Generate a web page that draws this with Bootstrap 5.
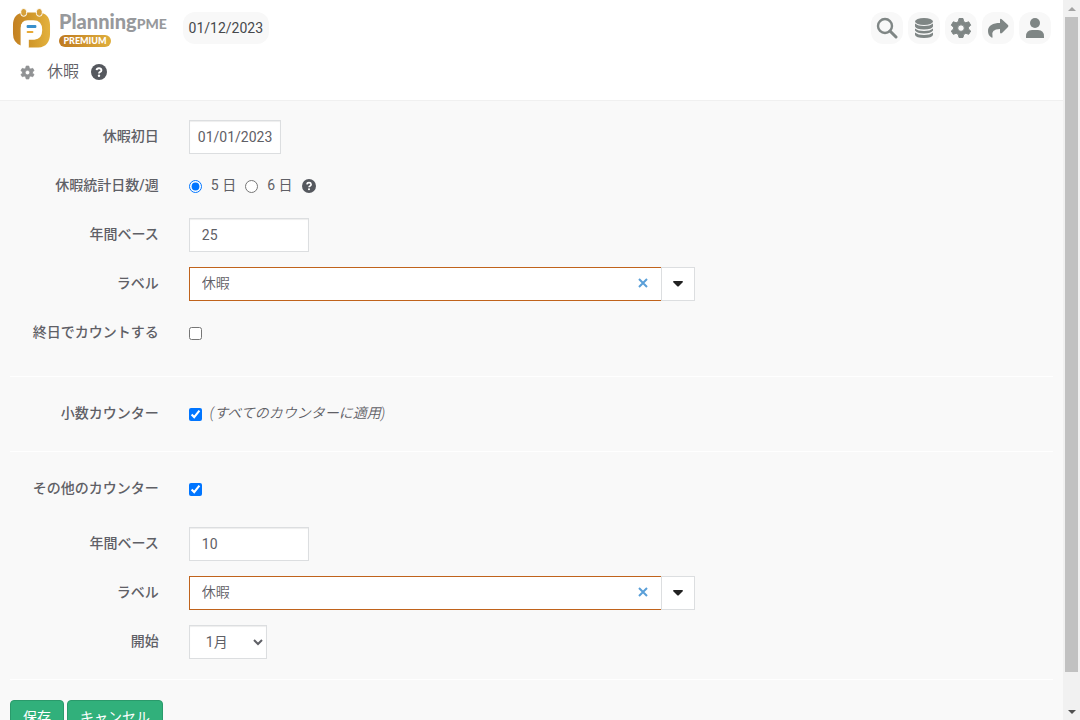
<!DOCTYPE html>
<html lang="ja">
<head>
<meta charset="utf-8">
<meta name="viewport" content="width=device-width, initial-scale=1">
<title>PlanningPME - 休暇</title>
<link href="https://cdn.jsdelivr.net/npm/bootstrap@5.3.0/dist/css/bootstrap.min.css" rel="stylesheet">
<style>
body{font-family:Roboto,"Noto Sans CJK JP",sans-serif;font-size:14px;line-height:20px;color:#5f6066;background:#f9f9f9}
.topbar{height:101px;border-bottom:1px solid #f0f0f0}
.brand-text{font-family:Lato,sans-serif;font-weight:900;font-size:20px;line-height:22px;color:#97999c}
.brand-text span{font-size:14px}
.premium{width:52px;height:12px;font-family:Lato,sans-serif;font-weight:900;font-size:9px;line-height:12px;background:linear-gradient(90deg,#bf7a20,#dfae3c)}
.date-pill{background:#f8f8f8;color:#46484c;height:32px;width:86px;border-radius:12px}
.tools{gap:5px;margin-right:-4px}
.tool{width:32px;height:32px;border-radius:12px;background:#f8f8f8;color:#7f8685}
.tool svg{width:22px;height:22px}
.page-title{font-size:16px;line-height:20px;font-weight:350}
.title-row{padding-top:14px}
.content{padding:19px 10px}
.form-line{--bs-gutter-x:30px;min-height:34px;margin-bottom:15px}
.form-line label.col-2{font-weight:500;line-height:20px;padding-top:6px}
.form-line .col-10{min-height:34px}
.form-line .col-10 label,.form-line em{line-height:20px;padding-bottom:2px}
.form-line em{font-weight:350}
.form-line .day-choice{margin:0 9px}
.form-line input.form-control,.form-line .form-select{height:34px;border:1px solid #dcdee0;border-radius:0;padding:6px 12px;font-size:14px;line-height:20px;color:#5f6066;box-shadow:inset 0 1px 1px rgba(0,0,0,.07)}
.form-line input.date-in{width:92px;padding:6px 8px}
.form-line .num-in{width:120px}
.form-line .form-select{width:78px;padding:6px 4px 6px 12px;appearance:auto;background:#fff}
.combo{width:506px}
.form-line .combo input.form-control{border-color:#c0631c;border-right:0;font-weight:350;box-shadow:none;padding:4px 32px 8px 12px}
.combo .clear-btn{right:45px;top:10px;z-index:6;line-height:0;color:#5a9fd8}
.combo .drop-btn{width:34px;height:34px;background:#fff;border:1px solid #dcdee0;border-radius:0;color:#222}
.tick{width:13px;height:13px;margin:0;accent-color:#0075ff}
.section-end{margin-bottom:26px}
.group-head{margin-bottom:21px}
hr.rule{border-top:1px solid #fff;opacity:1;margin:20px 0}
.btn-go{background:#31b07b;border:1px solid #2a9a6b;color:#fff;font-size:14px;line-height:20px;padding:6px 12px;border-radius:4px}
.actions{gap:3px}
.help{color:#55585e}
.scroll-rail{width:17px;background:#f1f1f1}
.scroll-arrow{height:17px}
.scroll-thumb{width:13px;flex:0 1 655px;background:#c1c1c1}
</style>
</head>
<body>
<div class="d-flex vh-100 overflow-hidden">
<div class="flex-grow-1 overflow-hidden">
  <header class="topbar bg-white">
    <div class="d-flex align-items-center justify-content-between px-2 pt-2 pe-3">
      <div class="d-flex align-items-center">
        <a href="#" class="d-flex align-items-center text-decoration-none" aria-label="PlanningPME">
          <svg class="ms-1 me-2" width="39" height="40" viewBox="0 0 40 40">
            <defs><linearGradient id="gold" x1="0" y1="0" x2="1" y2="0"><stop offset="0" stop-color="#c38022"/><stop offset=".55" stop-color="#d39b2c"/><stop offset="1" stop-color="#e4b23e"/></linearGradient></defs>
            <path d="M13 4H27C35 4 39 9 39 17V26C39 34 35 40 27 40H17V31H23Q30 31 30 22Q30 13 22 13H16Q9 13 9 20V38Q1 35 1 26V17C1 9 5 4 13 4Z" fill="url(#gold)"/>
            <path d="M22 12H16Q9 12 9 20V40H17V32H23Q31 31 31 22Q31 12 22 12Z" fill="#fff"/>
            <g fill="#d6a03a" stroke="#fff"><rect x="9" y="0" width="6" height="8" rx="3"/><rect x="25" y="0" width="6" height="8" rx="3"/></g>
            <rect x="15" y="17" width="10" height="3" rx="1" fill="#3a8fcb"/><rect x="15" y="23" width="7" height="2" rx="1" fill="#e7a935"/>
          </svg>
          <span class="d-flex flex-column">
            <span class="brand-text">Planning<span>PME</span></span>
            <span class="premium rounded-pill text-white text-center">PREMIUM</span>
          </span>
        </a>
        <span class="date-pill d-flex align-items-center justify-content-center ms-3">01/12/2023</span>
      </div>
      <nav class="d-flex tools">
        <button class="tool btn p-0 d-flex align-items-center justify-content-center" aria-label="検索"><svg viewBox="0 0 22 22" fill="none" stroke="currentColor"><circle cx="9" cy="9" r="7" stroke-width="2.4"/><path d="M14 14L20 20" stroke-width="3" stroke-linecap="round"/></svg></button>
        <button class="tool btn p-0 d-flex align-items-center justify-content-center" aria-label="データ"><svg viewBox="0 0 22 22" fill="currentColor"><ellipse cx="11" cy="4.500" rx="9" ry="3.500"/><path d="M2 6.500Q5 9 11 9T20 6.500V9.500Q19 12.500 11 12.500T2 9.500ZM2 11.500Q5 14 11 14T20 11.500V13.500Q18 16.500 11 16.500T2 13.500ZM2 15.500Q5 18 11 18T20 15.500V18Q19 21 11 21T2 18Z"/></svg></button>
        <button class="tool btn p-0 d-flex align-items-center justify-content-center" aria-label="設定"><svg viewBox="0 0 22 22"><use href="#cog"/></svg></button>
        <button class="tool btn p-0 d-flex align-items-center justify-content-center" aria-label="共有"><svg viewBox="0 0 22 22" fill="currentColor"><path d="M13 2.500V6C6 6 1 8.500 1 14Q1 18.500 4.500 20.500Q6 21 5.500 19.500Q3.500 12 13 12V15.500Q13.500 17 15 16L21 10Q21.800 9 21 8L15 2.500Q13.500 1.200 13 2.500Z"/></svg></button>
        <button class="tool btn p-0 d-flex align-items-center justify-content-center" aria-label="ユーザー"><svg viewBox="0 0 22 22" fill="currentColor"><circle cx="11" cy="6" r="5"/><path d="M2 21V19.500Q2 13 8 13H14Q20 13 20 19.500V21Z"/></svg></button>
      </nav>
    </div>
    <div class="title-row d-flex align-items-center ps-3">
      <svg class="ms-1" width="15" height="15" viewBox="0 0 22 22" style="color:#909294"><use href="#cog"/></svg>
      <h1 class="page-title mb-0 ms-2 ps-1 me-2">休暇</h1>
      <svg class="help ms-1" width="16" height="16" viewBox="0 0 16 16"><use href="#help"/></svg>
    </div>
  </header>
  <svg class="d-none">
    <symbol id="cog" viewBox="0 0 22 22"><path fill="currentColor" fill-rule="evenodd" stroke="currentColor" stroke-linejoin="round" d="M9 1.500H13L13.600 4.500L15.800 5.800L18.700 4.800L20.700 8.200L18.400 10.200V12L20.700 14L18.700 17.300L15.800 16.300L13.600 17.600L13 20.500H9L8.400 17.600L6.200 16.300L3.300 17.300L1.300 14L3.600 12V10.200L1.300 8.200L3.300 4.800L6.200 5.800L8.400 4.500ZM11 7.800A3.300 3.300 0 1 0 11 14.400A3.300 3.300 0 1 0 11 7.800Z"/></symbol>
    <symbol id="help" viewBox="0 0 16 16"><circle cx="8" cy="8" r="8" fill="currentColor"/><path d="M5.600 6.200Q5.800 4.200 8 4.200T10.400 6.200Q10.400 7.300 9.200 7.900Q8 8.500 8 9.500" fill="none" stroke="#fff" stroke-width="1.900"/><circle cx="8" cy="11.700" r="1.200" fill="#fff"/></symbol>
  </svg>

  <form class="content" onsubmit="return false">
    <div class="row form-line">
      <label class="col-2 text-end" for="first">休暇初日</label>
      <div class="col-10"><input id="first" class="form-control date-in" value="01/01/2023"></div>
    </div>
    <div class="row form-line" role="group" aria-labelledby="week">
      <label class="col-2 text-end" id="week" for="d5">休暇統計日数/週</label>
      <div class="col-10 d-flex align-items-center">
        <input id="d5" class="tick" type="radio" name="days" checked><label class="day-choice" for="d5">5 日</label>
        <input id="d6" class="tick" type="radio" name="days"><label class="day-choice" for="d6">6 日</label>
        <svg class="help" width="14" height="14" viewBox="0 0 16 16"><use href="#help"/></svg>
      </div>
    </div>
    <div class="row form-line">
      <label class="col-2 text-end" for="base1">年間ベース</label>
      <div class="col-10"><input id="base1" class="form-control num-in" value="25"></div>
    </div>
    <div class="row form-line">
      <label class="col-2 text-end" for="label1">ラベル</label>
      <div class="col-10">
        <div class="combo d-flex position-relative">
          <input id="label1" class="form-control" value="休暇">
          <button type="button" class="clear-btn btn p-0 border-0 position-absolute" aria-label="クリア"><svg width="14" height="12" viewBox="0 0 14 12"><path d="M3 2L11 10M11 2L3 10" stroke="currentColor" stroke-width="2"/></svg></button>
          <button type="button" class="drop-btn btn p-0 flex-shrink-0 d-flex align-items-center justify-content-center" aria-label="開く"><svg width="10" height="6" viewBox="0 0 10 6"><path d="M0 1Q0 0 1 0H9Q10 0 10 1L6 5Q5 6 4 5Z" fill="currentColor"/></svg></button>
        </div>
      </div>
    </div>
    <div class="row form-line section-end">
      <label class="col-2 text-end" for="whole">終日でカウントする</label>
      <div class="col-10 d-flex align-items-center"><input id="whole" class="tick" type="checkbox"></div>
    </div>
    <hr class="rule">
    <div class="row form-line">
      <label class="col-2 text-end" for="decimal">小数カウンター</label>
      <div class="col-10 d-flex align-items-center"><input id="decimal" class="tick me-2" type="checkbox" checked><em>(すべてのカウンターに適用)</em></div>
    </div>
    <hr class="rule">
    <div class="row form-line group-head">
      <label class="col-2 text-end" for="other">その他のカウンター</label>
      <div class="col-10 d-flex align-items-center"><input id="other" class="tick" type="checkbox" checked></div>
    </div>
    <div class="row form-line">
      <label class="col-2 text-end" for="base2">年間ベース</label>
      <div class="col-10"><input id="base2" class="form-control num-in" value="10"></div>
    </div>
    <div class="row form-line">
      <label class="col-2 text-end" for="label2">ラベル</label>
      <div class="col-10">
        <div class="combo d-flex position-relative">
          <input id="label2" class="form-control" value="休暇">
          <button type="button" class="clear-btn btn p-0 border-0 position-absolute" aria-label="クリア"><svg width="14" height="12" viewBox="0 0 14 12"><path d="M3 2L11 10M11 2L3 10" stroke="currentColor" stroke-width="2"/></svg></button>
          <button type="button" class="drop-btn btn p-0 flex-shrink-0 d-flex align-items-center justify-content-center" aria-label="開く"><svg width="10" height="6" viewBox="0 0 10 6"><path d="M0 1Q0 0 1 0H9Q10 0 10 1L6 5Q5 6 4 5Z" fill="currentColor"/></svg></button>
        </div>
      </div>
    </div>
    <div class="row form-line">
      <label class="col-2 text-end" for="start">開始</label>
      <div class="col-10"><select id="start" class="form-select"><option>1月</option></select></div>
    </div>
    <hr class="rule">
    <div class="actions d-flex">
      <button class="btn btn-go">保存</button>
      <button class="btn btn-go">キャンセル</button>
    </div>
  </form>
</div>
<div class="scroll-rail d-flex flex-column align-items-center flex-shrink-0" aria-hidden="true">
  <div class="scroll-arrow d-flex align-items-center"><svg width="8" height="4" viewBox="0 0 8 4"><path d="M0 4L4 0L8 4Z" fill="#a3a3a3"/></svg></div>
  <div class="scroll-thumb"></div>
  <div class="scroll-arrow d-flex align-items-center mt-auto"><svg width="8" height="4" viewBox="0 0 8 4"><path d="M0 0L4 4L8 0Z" fill="#505050"/></svg></div>
</div>
</div>
<script src="https://cdn.jsdelivr.net/npm/bootstrap@5.3.0/dist/js/bootstrap.bundle.min.js"></script>
</body>
</html>
